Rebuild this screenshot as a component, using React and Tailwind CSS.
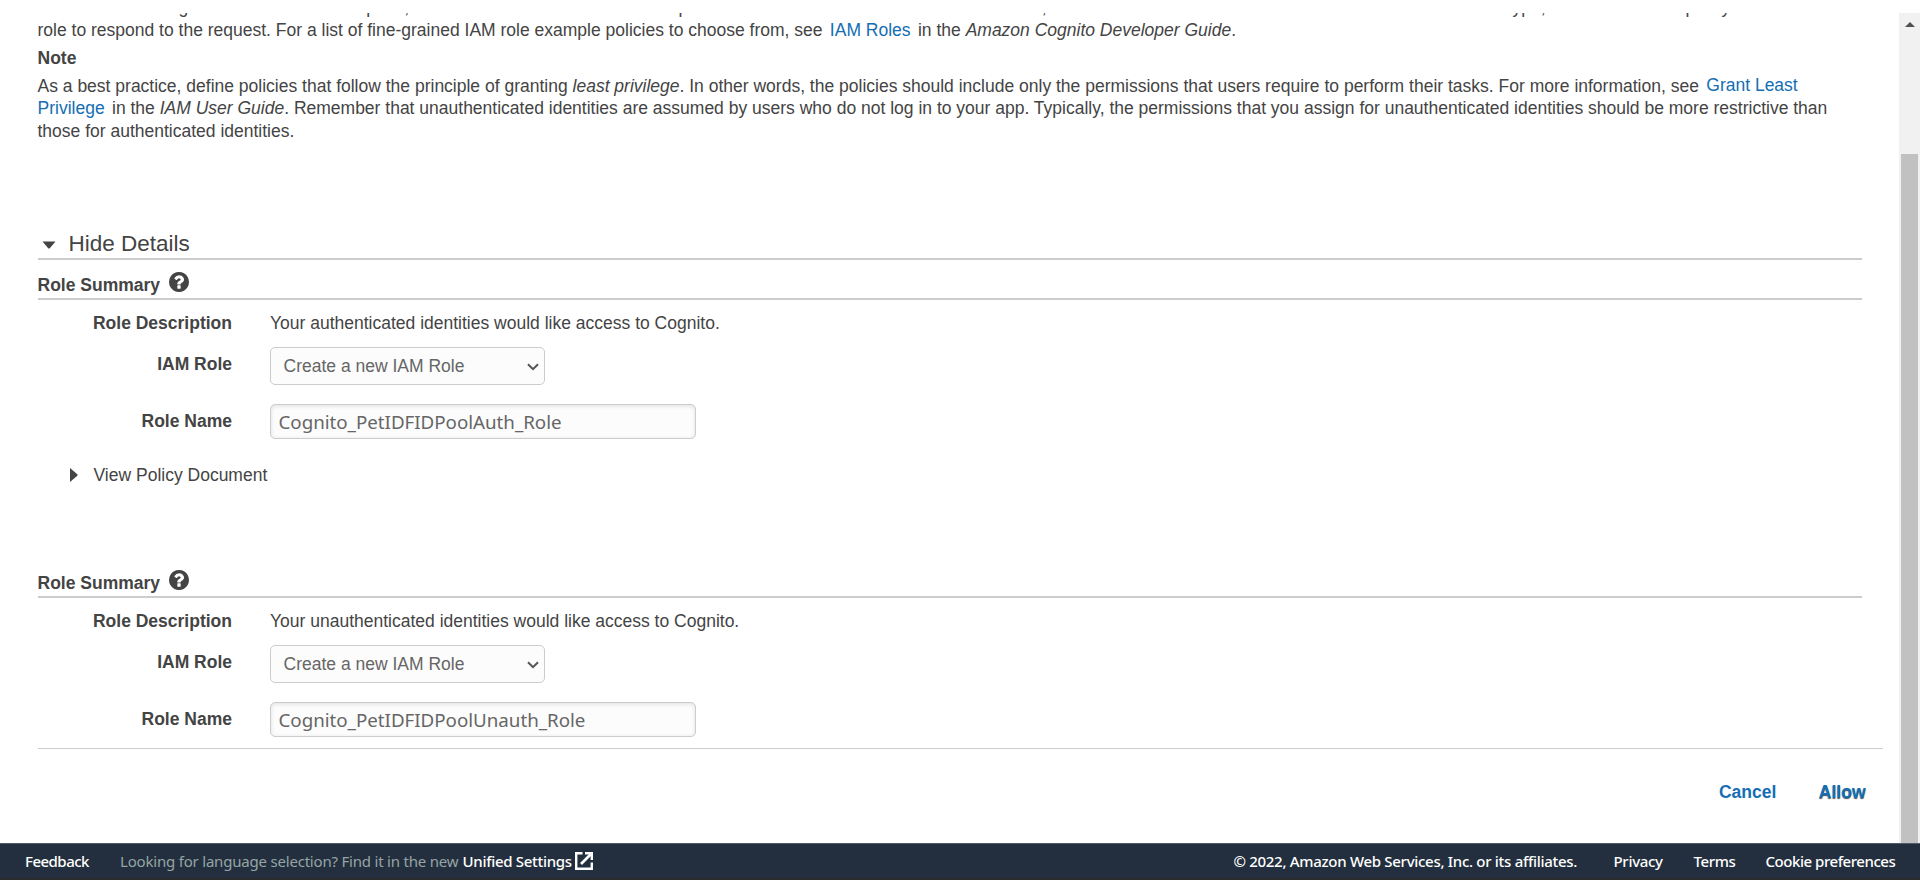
import React from 'react';

function HelpIcon() {
  return (
    <svg viewBox="128 128 1536 1536" className="mt-[2px] ml-[8.5px] size-5 shrink-0" fill="#444444">
      <path d="M1024 1376v-192q0-14-9-23t-23-9h-192q-14 0-23 9t-9 23v192q0 14 9 23t23 9h192q14 0 23-9t9-23zm256-672q0-88-55.500-163t-138.500-116-170-41q-243 0-371 213-15 24 8 42l132 100q7 6 19 6 16 0 25-12 53-68 86-92 34-24 86-24 48 0 85.500 26t37.500 59q0 38-20 61t-68 45q-63 28-115.500 86.500t-52.500 125.500v36q0 14 9 23t23 9h192q14 0 23-9t9-23q0-19 21.500-49.500t54.500-49.500q32-18 49-28.500t46-35 44.500-48 28-60.500 12.500-81zm384 192q0 209-103 385.500t-279.500 279.500-385.500 103-385.500-103-279.500-279.500-103-385.500 103-385.500 279.500-279.500 385.500-103 385.500 103 279.500 279.500 103 385.500z" />
    </svg>
  );
}

function ExternalIcon() {
  return (
    <svg viewBox="0 0 18 18" className="ml-[3px] h-[18px] w-[18px]" fill="none" stroke="#ffffff" strokeWidth="2.4">
      <path d="M7.500 1.200H1.200V16.800H16.800V10.500" />
      <path d="M6 12L15.500 2.500" strokeWidth="2.600" />
      <path d="M10 1.200h6.800V8" />
    </svg>
  );
}

function Field({ label, className, labelClass, children }) {
  return (
    <div className={`flex ${className}`}>
      <div className={`mr-[38px] w-[194.5px] text-right font-bold ${labelClass}`}>{label}</div>
      {children}
    </div>
  );
}

function RoleSummary({ description, roleName }) {
  return (
    <section>
      <div className="flex h-[30px] w-[1824px] items-start border-b-2 border-[#cccccc]">
        <h2 className="pt-1 font-bold">Role Summary</h2>
        <HelpIcon />
      </div>
      <Field label="Role Description" className="mt-3 h-[22px]" labelClass="">
        <p>{description}</p>
      </Field>
      <Field label="IAM Role" className="mt-[13px] h-[38px]" labelClass="pt-[6px]">
        <button className="flex w-[275px] items-center justify-between rounded-[5px] border border-[#cccccc] bg-[#fcfcfc] pr-[5px] pl-[12.5px] text-[#666666]">
          <span>Create a new IAM Role</span>
          <svg viewBox="0 0 12 8" className="mt-px h-2 w-3" fill="none" stroke="#555555" strokeWidth="2">
            <path d="M1 1.200L6 6.200L11 1.200" />
          </svg>
        </button>
      </Field>
      <Field label="Role Name" className="mt-[19px] h-[35px]" labelClass="pt-[6px]">
        <input
          readOnly
          value={roleName}
          className="w-[426px] rounded-[5px] border border-[#cccccc] bg-[#fcfcfc] px-[7.5px] font-['Noto_Sans',sans-serif] text-[18.75px] tracking-[-0.02px] text-[#666666] shadow-[inset_0_1px_4px_rgba(0,0,0,0.12)] outline-none"
        />
      </Field>
    </section>
  );
}

export default function App() {
  return (
    <div className="flex h-[880px] w-[1920px] flex-col overflow-hidden bg-white pt-[13px] font-['Liberation_Sans',Arial,sans-serif] text-[17.5px] leading-[22px] whitespace-nowrap text-[#444444]">
      <div className="flex h-[830px]">
        <main className="w-[1899px] overflow-hidden pl-[37.5px]">
          <div className="-mt-[17px] flex h-[22px]">
            <span className="ml-[141px]">g</span>
            <span className="ml-[178px]">pose,</span>
            <span className="ml-[269.5px]">p</span>
            <span className="ml-[353.5px]">,</span>
            <span className="ml-[461px]">type,</span>
            <span className="ml-[140px]">policy</span>
          </div>
          <p className="mt-px">
            role to respond to the request. For a list of fine-grained IAM role example policies to choose from, see{' '}
            <a className="mx-[2.5px] text-[#146eb4]">IAM Roles</a> in the <i>Amazon Cognito Developer Guide</i>.
          </p>
          <p className="mt-[6px] font-bold">Note</p>
          <p className="mt-[6px]">
            As a best practice, define policies that follow the principle of granting <i>least privilege</i>. In other
            words, the policies should include only the permissions that users require to perform their tasks. For more
            information, see <a className="relative -top-px ml-[2.5px] text-[#146eb4]">Grant Least</a>
          </p>
          <p>
            <a className="mr-[2.5px] text-[#146eb4]">Privilege</a> in the <i>IAM User Guide</i>. Remember that
            unauthenticated identities are assumed by users who do not log in to your app. Typically, the permissions
            that you assign for unauthenticated identities should be more restrictive than
          </p>
          <p className="mt-px">those for authenticated identities.</p>

          <div className="mt-[86px] flex h-[32px] w-[1824px] items-start border-b-2 border-[#cccccc]">
            <svg viewBox="0 0 14 8" className="mt-[13px] ml-1 h-2 w-[14px]" fill="#444444">
              <path d="M0.500 0.500H13.500L7.800 7.200Q7 8 6.200 7.200Z" />
            </svg>
            <span className="ml-[13px] pt-px text-[22.5px] leading-[30px]">Hide Details</span>
          </div>
          <div className="mt-[10px]">
            <RoleSummary
              description="Your authenticated identities would like access to Cognito."
              roleName="Cognito_PetIDFIDPoolAuth_Role"
            />
          </div>
          <div className="mt-[25px] flex h-[22px] items-center">
            <svg viewBox="0 0 8 14" className="ml-[32.5px] h-[14px] w-2" fill="#444444">
              <path d="M0 0V14L7.300 7.700Q8 7 7.300 6.300Z" />
            </svg>
            <span className="ml-[15.5px]">View Policy Document</span>
          </div>
          <div className="mt-[82px]">
            <RoleSummary
              description="Your unauthenticated identities would like access to Cognito."
              roleName="Cognito_PetIDFIDPoolUnauth_Role"
            />
          </div>
          <div className="mt-[11px] flex w-[1845px] justify-end gap-[42.5px] border-t border-[#cccccc] pt-8 pr-[17px] font-bold text-[#146eb4]">
            <a>Cancel</a>
            <a className="[text-shadow:0_1px_1px_rgba(0,0,0,0.7)]">Allow</a>
          </div>
        </main>
        <div className="flex w-[21px] flex-col items-center bg-[#f1f1f1] pt-[9px]">
          <svg viewBox="0 0 10 5" className="h-[5px] w-[10px]" fill="#505050">
            <path d="M5 0L10 5H0Z" />
          </svg>
          <div className="mt-[127px] mr-px w-[17px] flex-1 bg-[#c1c1c1]" />
        </div>
      </div>
      <footer className="flex h-[35px] items-center border-t border-[#545b64] bg-[#232f3e] pr-[25px] pl-[25px] font-['Noto_Sans',sans-serif] text-[15px] font-medium text-white">
        <span className="w-[95px] tracking-[-0.52px]">Feedback</span>
        <span className="w-[342.5px] font-normal tracking-[-0.2px] text-[#95a5a6]">
          Looking for language selection? Find it in the new
        </span>
        <span className="w-[109.5px] tracking-[-0.3px]">Unified Settings</span>
        <ExternalIcon />
        <div className="ml-auto flex">
          <span className="w-[380px] tracking-[-0.3px]">© 2022, Amazon Web Services, Inc. or its affiliates.</span>
          <span className="w-[80px] tracking-[-0.3px]">Privacy</span>
          <span className="w-[72px] tracking-[-0.4px]">Terms</span>
          <span className="w-[129.5px] tracking-[-0.46px]">Cookie preferences</span>
        </div>
      </footer>
      <div className="h-[2px] bg-[#2b2b2b]" />
    </div>
  );
}
